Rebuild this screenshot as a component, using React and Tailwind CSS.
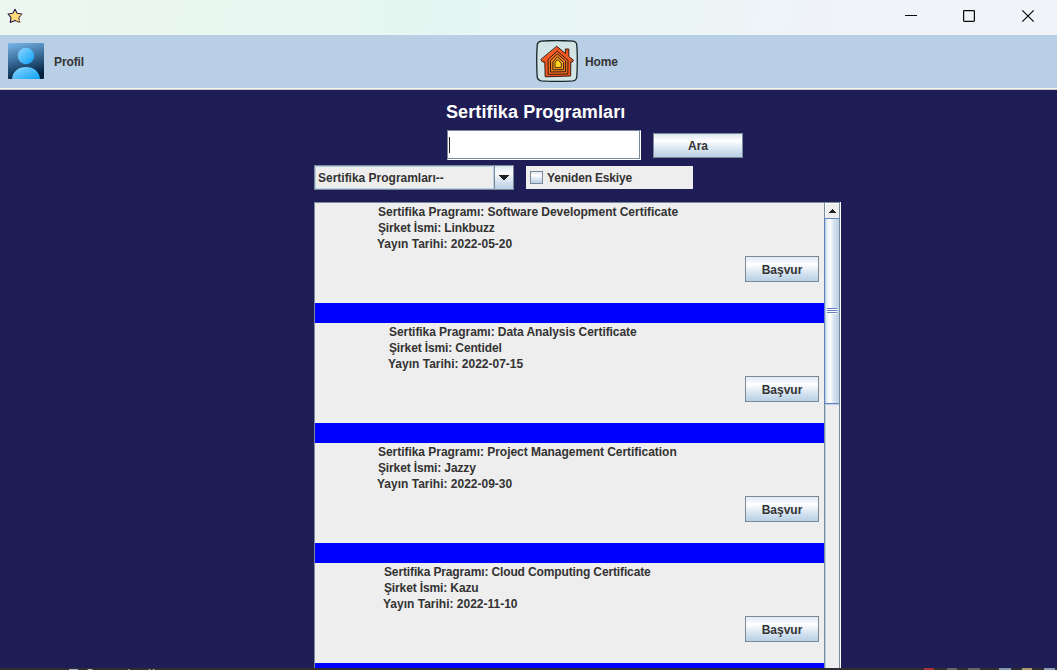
import React from "react";

const programs = [
  { pad: "pl-[63px]", tracking: "tracking-[-0.025px]", name: "Software Development Certificate", company: "Linkbuzz", date: "2022-05-20" },
  { pad: "pl-[74px]", tracking: "tracking-[-0.06px]", name: "Data Analysis Certificate", company: "Centidel", date: "2022-07-15" },
  { pad: "pl-[63px]", tracking: "tracking-[-0.04px]", name: "Project Management Certification", company: "Jazzy", date: "2022-09-30" },
  { pad: "pl-[69px]", tracking: "tracking-[-0.13px]", name: "Cloud Computing Certificate", company: "Kazu", date: "2022-11-10" },
];

const metal = "bg-[linear-gradient(to_bottom,#dde8f3_0%,#ffffff_30%,#dde8f3_60%,#b8cfe5_100%)]";

function TitleBar() {
  return (
    <header className="flex h-[35px] shrink-0 items-start bg-[linear-gradient(100deg,#ecf7ef_0%,#e5f6f2_42%,#e8f6f4_52%,#f0f3f8_80%,#f1f3f8_100%)]">
      <svg className="mt-2 ml-[7px]" width="16" height="16" viewBox="0 0 16 16">
        <path d="M8 1.2 L10.2 5.2 L15 6 L11.8 9.6 L12.8 14.5 L8 12.4 L3.2 14.5 L4 9.6 L1 6 L5.8 5.2 Z" fill="#ffdc7a" stroke="#fff" strokeWidth="2.6" strokeLinejoin="round" />
        <path d="M8 1.2 L10.2 5.2 L15 6 L11.8 9.6 L12.8 14.5 L8 12.4 L3.2 14.5 L4 9.6 L1 6 L5.8 5.2 Z" fill="#ffdc7a" stroke="#1c1b45" strokeWidth="1.1" strokeLinejoin="round" />
        <path d="M14.6 6.6 L11.8 9.6 L12.8 14.5 L9 12.8" fill="none" stroke="#ffc964" strokeWidth="1" strokeDasharray="1.5 1.5" />
      </svg>
      <svg className="mt-[9px] ml-auto" width="130" height="14" viewBox="0 0 130 14" fill="none" stroke="#080808">
        <path d="M0 6.5H12" />
        <rect x="58.6" y="1.6" width="10.8" height="10.8" rx="0.8" strokeWidth="1.2" />
        <path d="M117.3 1.3L128.7 12.7M128.7 1.3L117.3 12.7" strokeWidth="1.2" />
      </svg>
      <div className="w-[22px]" />
    </header>
  );
}

function ProfileIcon() {
  return (
    <svg width="36" height="36" viewBox="0 0 36 36">
      <defs>
        <linearGradient id="pbg" x1="0" y1="0" x2="0.25" y2="1">
          <stop offset="0" stopColor="#78b6ea" />
          <stop offset="0.5" stopColor="#3c6f9c" />
          <stop offset="1" stopColor="#022340" />
        </linearGradient>
        <linearGradient id="pfg" x1="0" y1="0" x2="1" y2="1">
          <stop offset="0" stopColor="#90d8ff" />
          <stop offset="1" stopColor="#08a0f5" />
        </linearGradient>
        <clipPath id="pclip"><rect width="36" height="36" rx="1" /></clipPath>
      </defs>
      <g clipPath="url(#pclip)">
        <rect width="36" height="36" fill="url(#pbg)" />
        <circle cx="18" cy="13" r="8.2" fill="url(#pfg)" />
        <path d="M4 37C4 29 10 24 18 24S32 29 32 37Z" fill="url(#pfg)" />
      </g>
    </svg>
  );
}

function HomeIcon() {
  return (
    <svg width="42" height="42" viewBox="0 0 42 42" strokeLinejoin="round" strokeLinecap="round">
      <path d="M5 1.2Q20 -0.2 37 1.2Q40.6 1.8 40.8 5Q41.8 20 40.8 37Q40.2 40.6 37 40.9Q20 42 5 40.8Q1.6 40.2 1.2 37Q0.2 20 1.2 5Q1.6 1.8 5 1.2Z" fill="#d3e4e4" stroke="#17242a" strokeWidth="1.3" />
      <path d="M21 6.5L29.5 13.5L29.3 9H32.8V16.5L37.5 20.3L36.3 22L34.8 21.8L34.6 36L9.2 36.8L8.8 22L6.6 22L5 19.8Z" fill="#f4581f" stroke="#351b12" strokeWidth="1" />
      <path d="M21.5 11.4L32 20.3L31.8 34L12.2 34.4L12 20Z" fill="#f26a20" stroke="#351b12" strokeWidth="1" />
      <path d="M21.6 14.2L29.7 21L29.5 31.7L14.6 32L14.4 21Z" fill="#f58620" stroke="#351b12" strokeWidth="1" />
      <path d="M21.7 17L27.6 22.3V29.6L16.9 29.8V22.4Z" fill="#fba41d" stroke="#351b12" strokeWidth="1" />
      <path d="M21.8 19.8L25.3 23V27.6H19V23Z" fill="#ffd51f" stroke="#351b12" strokeWidth="0.9" />
    </svg>
  );
}

function MenuBar() {
  return (
    <nav className="flex h-[55px] shrink-0 border-b border-[#cccdc6] bg-[#b8cfe5]">
      <div className="flex w-full items-start border-b border-[#f4f6f5]">
        <div className="flex w-[528px] items-center pt-2 pl-2">
          <ProfileIcon />
          <span className="ml-[10px] pt-0.5 tracking-[-0.1px]">Profil</span>
        </div>
        <div className="flex items-center pt-[5px] pl-2">
          <HomeIcon />
          <span className="ml-[7px] pt-0.5 tracking-[-0.1px]">Home</span>
        </div>
      </div>
    </nav>
  );
}

function ProgramRow({ program }) {
  return (
    <li>
      <div className="flex h-[100px] flex-col bg-[#eeeeee]">
        <div className={"pt-px leading-4 whitespace-nowrap " + program.pad}>
          <p className={program.tracking}>Sertifika Pragramı: {program.name}</p>
          <p className="tracking-[-0.13px]">Şirket İsmi: {program.company}</p>
          <p className="-ml-px">Yayın Tarihi: {program.date}</p>
        </div>
        <button className={"mt-1 mr-[5px] h-[26px] w-[74px] self-end border border-[#7a8a99] pt-px text-[12px] " + metal}>Başvur</button>
      </div>
      <div className="h-5 bg-[#0000ff]" />
    </li>
  );
}

function ScrollBar() {
  return (
    <div className="flex w-[15px] shrink-0 flex-col border-l border-[#7a8a99] bg-[#eeeeee]">
      <div className="flex h-[15px] shrink-0 items-center justify-center border-t border-l border-white pr-px">
        <svg width="9" height="5" viewBox="0 0 9 5" shapeRendering="crispEdges"><path d="M4 0H5V1H6V2H7V3H8V4H1V3H2V2H3V1H4Z" fill="#222" /></svg>
      </div>
      <div className="-ml-px flex h-[186px] shrink-0 items-center justify-center border-y border-l border-[#6382bf] bg-[linear-gradient(to_right,#b8cfe5_0,#b8cfe5_1px,#dde8f3_1px,#ffffff_5px,#dde8f3_8px,#b8cfe5_14px)] pb-px">
        <div className="flex flex-col">
          <i className="h-0.5 w-[10px] border-t border-[#6382bf] bg-white" />
          <i className="h-0.5 w-[10px] border-t border-[#6382bf] bg-white" />
          <i className="h-0.5 w-[10px] border-t border-[#6382bf] bg-white" />
        </div>
      </div>
      <div className="flex-1 border-t border-l border-[#b8cfe5]" />
    </div>
  );
}

export default function App() {
  return (
    <div className="flex h-[670px] w-[1057px] flex-col overflow-hidden bg-[#1f1d56] font-['Liberation_Sans',Arial,sans-serif] text-[12px] font-bold text-[#333333]">
      <TitleBar />
      <MenuBar />
      <main className="flex h-[578px] shrink-0 flex-col overflow-hidden pl-[314px]">
        <h1 className="mt-[10px] ml-[132px] h-6 text-[18px] leading-6 tracking-[0.11px] whitespace-nowrap text-white">Sertifika Programları</h1>
        <div className="mt-[6px] ml-[133px] flex items-center gap-3">
          <div className="h-[30px] w-[194px] border-t border-r border-b border-l border-t-[#7a8a99] border-r-white border-b-white border-l-[#7a8a99] bg-white">
            <div className="flex h-full items-center border-r border-b border-[#7a8a99] pl-px">
              <i className="h-4 w-px bg-[#222]" />
            </div>
          </div>
          <button className={"h-[25px] w-[90px] border border-[#7a8a99] pt-px " + metal}>Ara</button>
        </div>
        <div className="mt-[5px] flex items-center gap-3">
          <div className="flex h-[25px] w-[200px] border border-[#7a8a99] bg-[#eeeeee]">
            <div className="flex flex-1 items-center border border-[#b8cfe5] pl-[2px] tracking-[-0.01px]">Sertifika Programları--</div>
            <div className={"flex w-[19px] items-center justify-center border-l border-[#7a8a99] " + metal}>
              <svg width="10" height="5" viewBox="0 0 10 5" shapeRendering="crispEdges"><path d="M0 0H10V1H9V2H8V3H7V4H6V5H4V4H3V3H2V2H1V1H0Z" fill="#222" /></svg>
            </div>
          </div>
          <label className="flex h-[23px] w-[167px] items-center bg-[#eeeeee] pl-1">
            <span className={"h-[13px] w-[13px] border border-[#7a8a99] " + metal} />
            <span className="ml-1 tracking-[-0.17px]">Yeniden Eskiye</span>
          </label>
        </div>
        <section className="mt-3 flex h-[500px] w-[527px] shrink-0 border-r border-white">
          <div className="flex w-[526px] border-t border-r border-l border-[#7a8a99]">
            <ul className="w-[509px] shrink-0">
              {programs.map((p) => <ProgramRow key={p.name} program={p} />)}
            </ul>
            <ScrollBar />
          </div>
        </section>
      </main>
      <footer className="flex h-[2px] shrink-0 overflow-hidden bg-[#302d31] text-[13px] leading-[14px] font-normal text-[#c5c5c5]">
        <span className="mt-px ml-[69px] h-3 w-[9px] border border-[#a0b0c8]" />
        <span className="-mt-px ml-[7px] tracking-[1px]">Console</span>
        <span className="-mt-[3px] ml-2">×</span>
        <span className="ml-auto h-[2px] w-[10px] bg-[#a43038]" />
        <span className="ml-[13px] h-[2px] w-[10px] bg-[#686469]" />
        <span className="ml-[11px] h-[2px] w-[12px] bg-[#66636a]" />
        <span className="ml-[19px] h-[2px] w-[12px] bg-[#8798aa]" />
        <span className="ml-[11px] h-[2px] w-[10px] bg-[#a99968]" />
        <span className="mr-[2px] ml-[12px] h-[2px] w-[11px] bg-[#8c9cb0]" />
      </footer>
    </div>
  );
}
